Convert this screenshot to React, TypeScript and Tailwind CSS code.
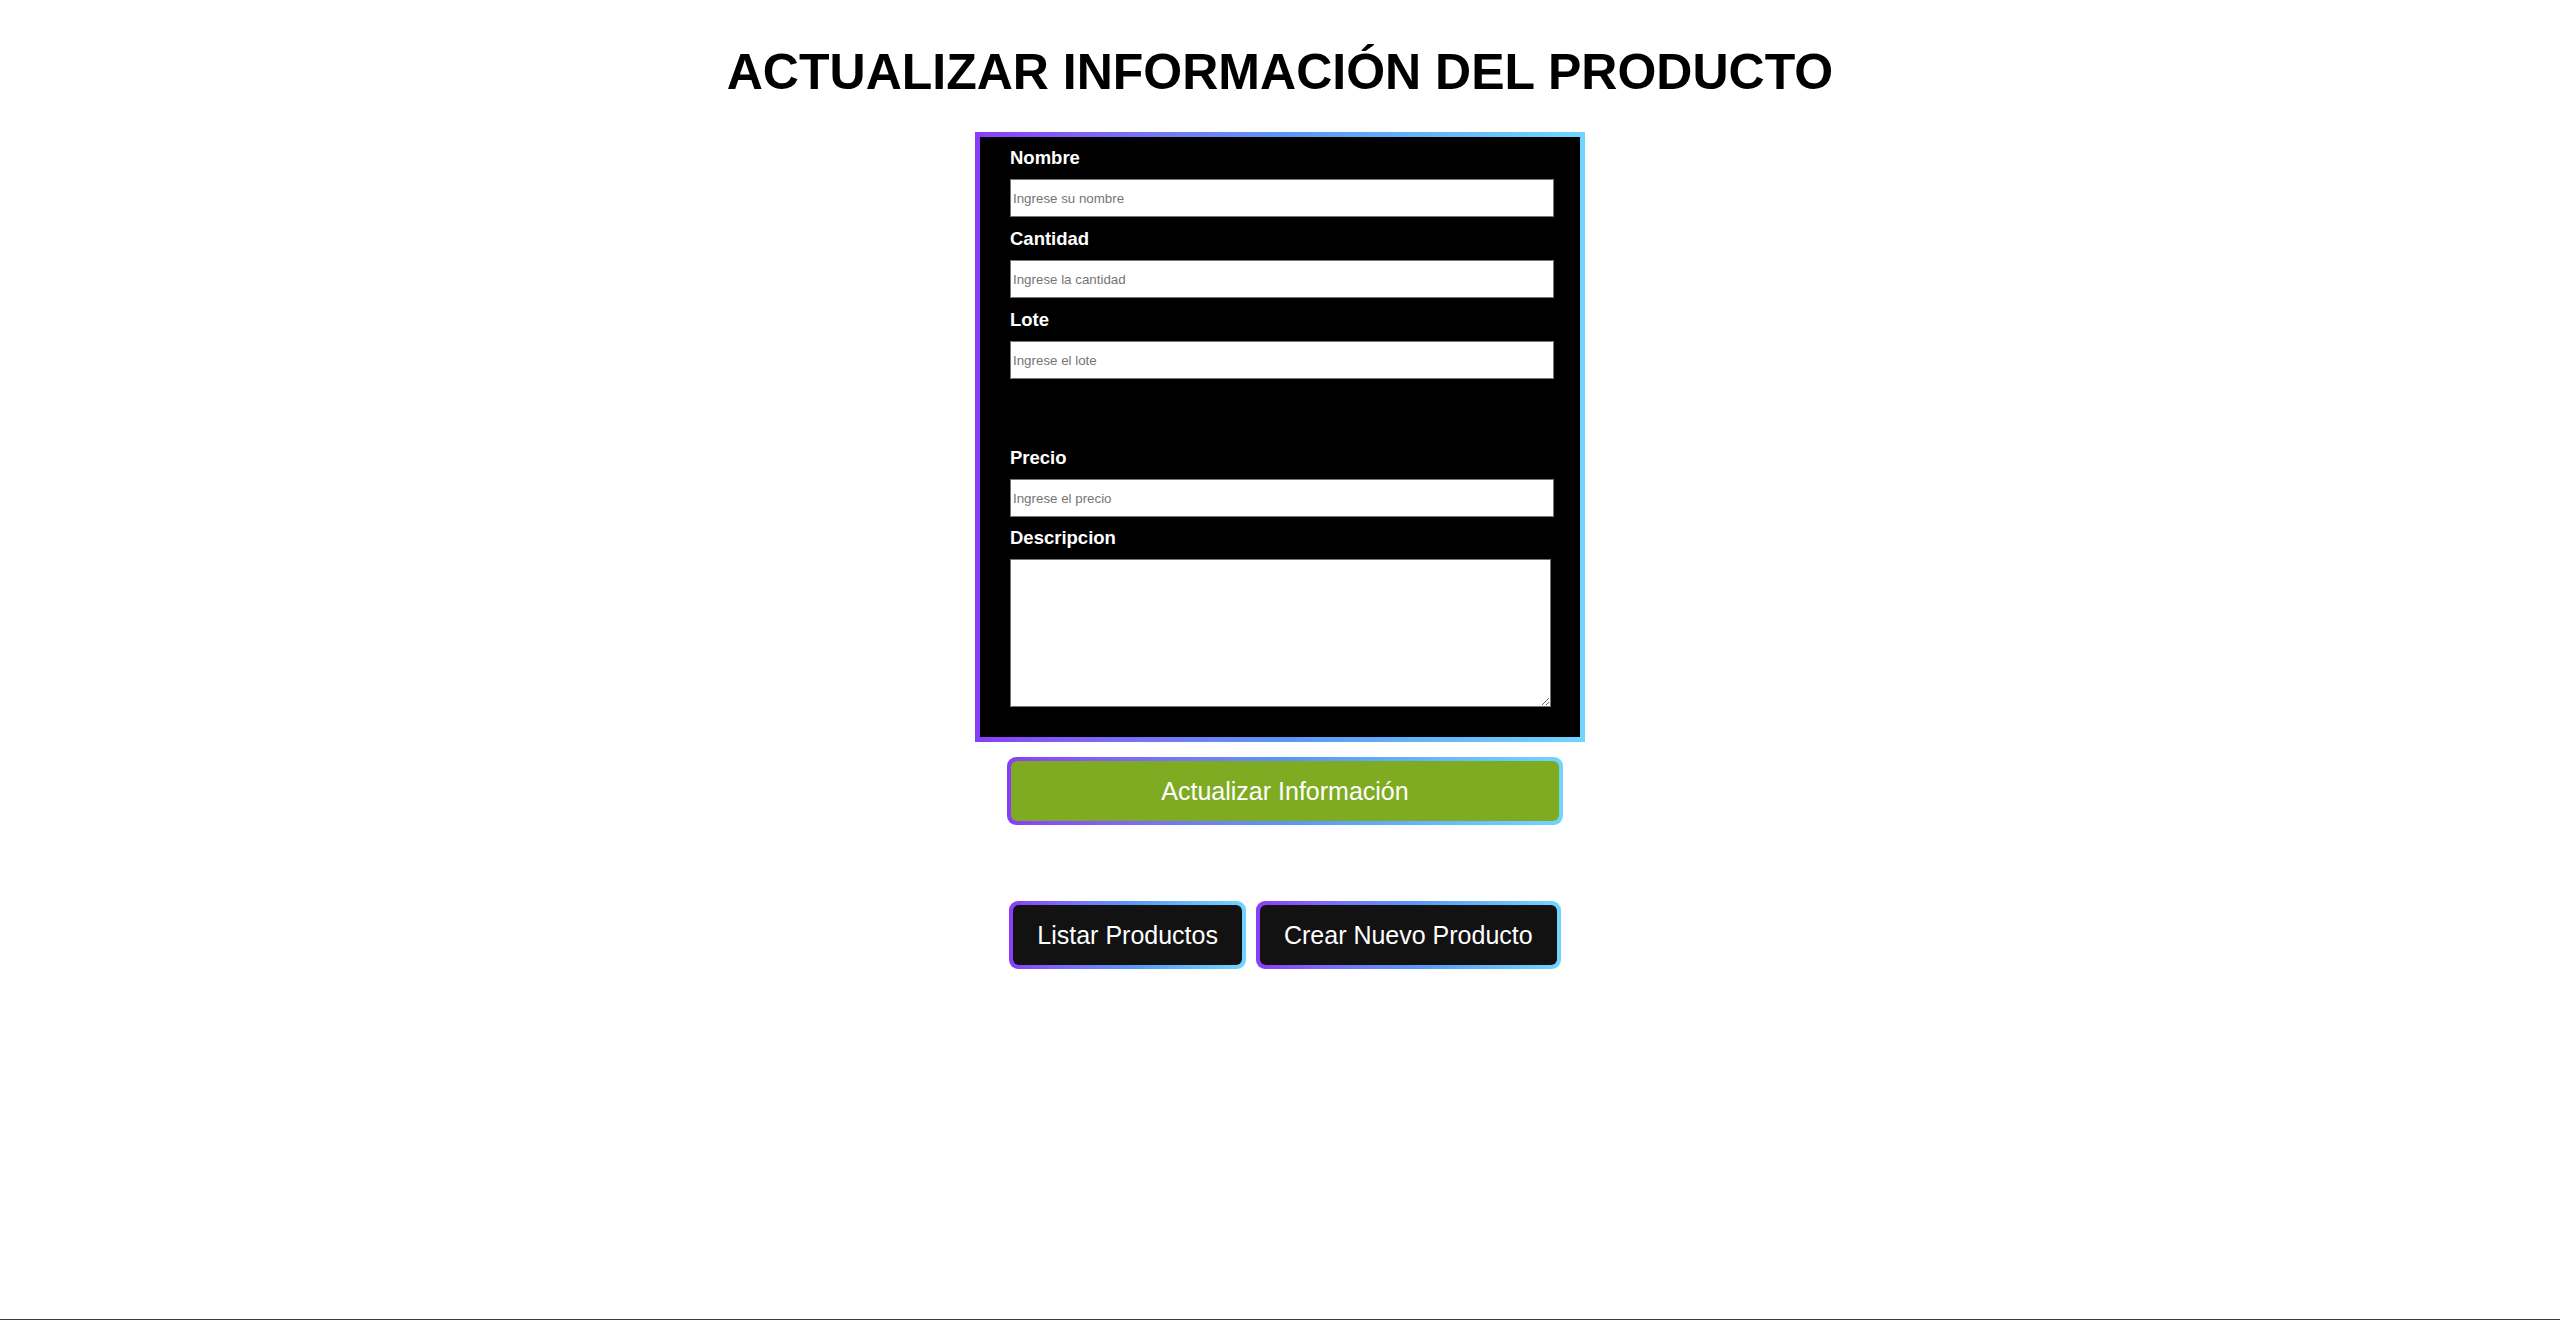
import { useState } from 'react'

const gradient = 'bg-linear-to-r from-[#8a3cf8] via-[#5a95f5] to-[#6fd6fd]'

interface FieldProps {
  label: string
  placeholder: string
  value: string
  onChange: (v: string) => void
  last?: boolean
}

function Field({ label, placeholder, value, onChange, last }: FieldProps) {
  return (
    <>
      <label className="block h-[21px] text-[18.5px] leading-[21px] font-bold text-white mb-[11px]">
        {label}
      </label>
      <input
        type="text"
        value={value}
        onChange={(e) => onChange(e.target.value)}
        placeholder={placeholder}
        className={`block w-[544px] h-[38px] bg-white border border-[#767676] px-[2px] text-[13.33px] text-black placeholder:text-[#757575] outline-none ${
          last ? 'mb-[10px]' : 'mb-[11px]'
        }`}
      />
    </>
  )
}

function GradientButton({
  children,
  fill,
  className = '',
}: {
  children: React.ReactNode
  fill: string
  className?: string
}) {
  return (
    <button className={`${gradient} rounded-[9px] p-[4px] cursor-pointer ${className}`}>
      <span
        className={`block rounded-[6px] ${fill} px-[24px] py-[16px] text-[25px] leading-[28px] text-white whitespace-nowrap`}
      >
        {children}
      </span>
    </button>
  )
}

export default function App() {
  const [nombre, setNombre] = useState('')
  const [cantidad, setCantidad] = useState('')
  const [lote, setLote] = useState('')
  const [precio, setPrecio] = useState('')
  const [descripcion, setDescripcion] = useState('')

  return (
    <div
      className="h-[1320px] flex flex-col bg-white text-black"
      style={{ fontFamily: '"Liberation Sans", Arial, sans-serif' }}
    >
      <h1 className="mt-[44px] mb-[31px] text-center text-[50px] leading-[57px] font-bold">
        ACTUALIZAR INFORMACIÓN DEL PRODUCTO
      </h1>

      <div className="flex flex-col items-center">
        <div className={`${gradient} w-[610px] h-[610px] p-[5px]`}>
          <form
            className="h-full bg-black pl-[30px] pt-[10px]"
            onSubmit={(e) => e.preventDefault()}
          >
            <Field label="Nombre" placeholder="Ingrese su nombre" value={nombre} onChange={setNombre} />
            <Field label="Cantidad" placeholder="Ingrese la cantidad" value={cantidad} onChange={setCantidad} />
            <Field label="Lote" placeholder="Ingrese el lote" value={lote} onChange={setLote} />
            {/* espacio vacío entre lote y precio */}
            <div className="h-[57px]" />
            <Field label="Precio" placeholder="Ingrese el precio" value={precio} onChange={setPrecio} last />
            <label className="block h-[21px] text-[18.5px] leading-[21px] font-bold text-white mb-[11px]">
              Descripcion
            </label>
            <textarea
              value={descripcion}
              onChange={(e) => setDescripcion(e.target.value)}
              className="block w-[541px] h-[148px] bg-white border border-[#767676] text-[13.33px] text-black outline-none"
            />
          </form>
        </div>

        <div className="flex flex-col items-center pl-[10px]">
          <GradientButton fill="bg-[#7eab22]" className="mt-[15px] w-[556px]">
            Actualizar Información
          </GradientButton>

          <div className="flex gap-[10px] mt-[76px]">
            <GradientButton fill="bg-[#121212]">Listar Productos</GradientButton>
            <GradientButton fill="bg-[#121212]">Crear Nuevo Producto</GradientButton>
          </div>
        </div>
      </div>

      <div className="mt-auto border-t border-[#3c3c3c]" />
    </div>
  )
}
